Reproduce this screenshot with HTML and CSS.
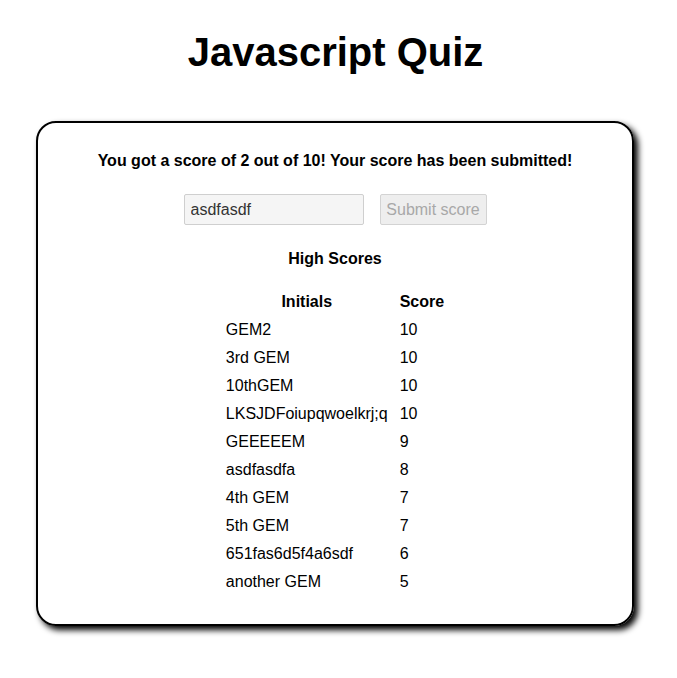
FILE: index.html
```html
<!DOCTYPE html>
<html lang="en">
<head>
<meta charset="utf-8">
<title>Javascript Quiz</title>
<link rel="stylesheet" href="styles.css">
</head>
<body>
<h1 class="title">Javascript Quiz</h1>
<main class="card">
  <p class="message">You got a score of 2 out of 10! Your score has been submitted!</p>
  <form class="submit-form">
    <input class="initials-input" type="text" value="asdfasdf">
    <button class="submit-btn" type="button" disabled>Submit score</button>
  </form>
  <h2 class="scores-heading">High Scores</h2>
  <table class="scores">
    <thead>
      <tr><th>Initials</th><th>Score</th></tr>
    </thead>
    <tbody>
      <tr><td>GEM2</td><td>10</td></tr>
      <tr><td>3rd GEM</td><td>10</td></tr>
      <tr><td>10thGEM</td><td>10</td></tr>
      <tr><td>LKSJDFoiupqwoelkrj;q</td><td>10</td></tr>
      <tr><td>GEEEEEM</td><td>9</td></tr>
      <tr><td>asdfasdfa</td><td>8</td></tr>
      <tr><td>4th GEM</td><td>7</td></tr>
      <tr><td>5th GEM</td><td>7</td></tr>
      <tr><td>651fas6d5f4a6sdf</td><td>6</td></tr>
      <tr><td>another GEM</td><td>5</td></tr>
    </tbody>
  </table>
</main>
</body>
</html>
```

FILE: styles.css
```css
html, body {
  margin: 0;
  padding: 0;
  background: #fff;
}

body {
  font-family: "Liberation Sans", Arial, Helvetica, sans-serif;
  color: #000;
  padding-bottom: 40px;
}

.title {
  font-size: 40px;
  font-weight: bold;
  text-align: center;
  margin: 29px 0 0;
  line-height: 46px;
  height: 46px;
  padding-right: 6px;
}

.card {
  box-sizing: border-box;
  width: 598px;
  height: 505px;
  margin: 46px 0 0 36px;
  border: 2px solid #000;
  border-radius: 20px;
  box-shadow: 4px 4px 6px #000;
  padding: 29px 0 0;
  display: flex;
  flex-direction: column;
  align-items: center;
}

.message {
  margin: 0;
  font-size: 16px;
  font-weight: bold;
  line-height: 18px;
  text-align: center;
}

.submit-form {
  margin: 24px 0 0;
  display: flex;
  gap: 16px;
}

.initials-input {
  box-sizing: border-box;
  width: 180px;
  height: 31px;
  padding: 0 6px;
  font-family: "Liberation Sans", Arial, sans-serif;
  font-size: 16px;
  color: #333;
  background: #f5f5f5;
  border: 1px solid #cfcfcf;
  border-radius: 2px;
  outline: none;
}

.submit-btn {
  box-sizing: border-box;
  width: 107px;
  height: 31px;
  padding: 0;
  white-space: nowrap;
  font-family: "Liberation Sans", Arial, sans-serif;
  font-size: 16px;
  color: #a8a8a8;
  background: #eeeeee;
  border: 1px solid #d3d3d3;
  border-radius: 2px;
}

.scores-heading {
  margin: 25px 0 0;
  font-size: 16px;
  font-weight: bold;
  line-height: 18px;
}

.scores {
  margin-top: 20px;
  border-collapse: collapse;
  font-size: 16px;
}

.scores th,
.scores td {
  padding: 5px 6px;
  line-height: 18px;
}

.scores th {
  font-weight: bold;
  text-align: center;
}

.scores td {
  text-align: left;
}
```
